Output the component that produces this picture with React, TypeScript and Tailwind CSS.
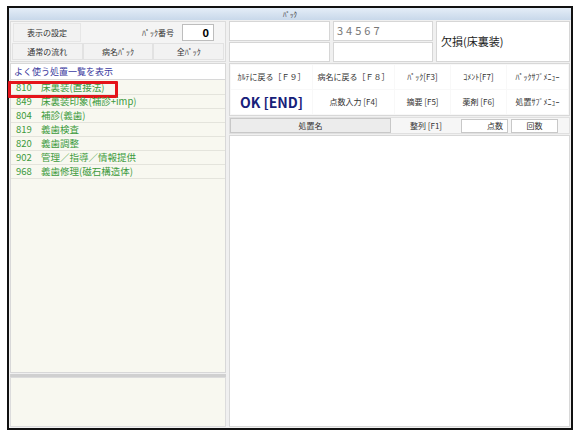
import React from 'react';

const font = { fontFamily: '"Noto Sans CJK JP", "Noto Sans", sans-serif' };

const items = [
  { code: '810', name: '床裏装(直接法)' },
  { code: '849', name: '床裏装印象(補診+imp)' },
  { code: '804', name: '補診(義歯)' },
  { code: '819', name: '義歯検査' },
  { code: '820', name: '義歯調整' },
  { code: '902', name: '管理／指導／情報提供' },
  { code: '968', name: '義歯修理(磁石構造体)' },
];

const row1 = ['ｶﾙﾃに戻る［Ｆ９］', '病名に戻る［Ｆ８］', 'ﾊﾟｯｸ[F3]', 'ｺﾒﾝﾄ[F7]', 'ﾊﾟｯｸｻﾌﾞﾒﾆｭｰ'];
const row2 = ['点数入力 [F4]', '摘要 [F5]', '薬剤 [F6]', '処置ｻﾌﾞﾒﾆｭｰ'];
const colW = ['w-[81px]', 'w-[81px]', 'w-[55px]', 'w-[55px]', 'flex-1'];

export default function App() {
  return (
    <div className="w-[581px] h-[436px] bg-white pt-[6px] pl-[7px]" style={font}>
      <div className="w-[566px] h-[424px] border-2 border-[#111] flex flex-col bg-[#f0f0f0]">
        {/* title bar */}
        <div className="h-[12px] bg-gradient-to-b from-[#e4edf7] to-[#c8d8ea] flex items-center justify-center text-[7px] leading-none text-[#333]">
          ﾊﾟｯｸ
        </div>

        <div className="flex-1 flex gap-[3px] pl-[1px] pt-[1px]">
          {/* left column */}
          <div className="w-[216px] flex flex-col">
            <div className="h-[41px] border border-[#dcdcdc] bg-[#f4f4f4] flex flex-col p-[1px] gap-[1px]">
              <div className="flex h-[19px] items-center">
                <div className="w-[68px] h-full ml-[1px] border border-[#e6e6e6] bg-[#f2f2f2] flex items-center justify-center text-[8px] text-[#333]">表示の設定</div>
                <div className="flex-1 text-right pr-[8px] text-[8px] text-[#333]">ﾊﾟｯｸ番号</div>
                <div className="w-[32px] h-[17px] mr-[10px] bg-white border border-[#bdbdbd] flex items-center justify-end pr-[4px] text-[11px] font-bold text-black">0</div>
              </div>
              <div className="flex h-[17px]">
                {['通常の流れ', '病名ﾊﾟｯｸ', '全ﾊﾟｯｸ'].map((t) => (
                  <div key={t} className="flex-1 border border-[#e2e2e2] bg-[#f2f2f2] flex items-center justify-center text-[8px] text-[#333]">{t}</div>
                ))}
              </div>
            </div>

            <div className="mt-[1px] h-[310px] border border-[#d8d8d8] bg-[#f8f8f0] flex flex-col">
              <div className="h-[16px] bg-white border-b border-[#d8d8d8] flex items-center pl-[3px] text-[9px] text-[#3b3ba0]">よく使う処置一覧を表示</div>
              <div className="flex flex-col pt-[1px]">
                {items.map((it) => (
                  <div key={it.code} className="relative h-[14px] border-b border-[#e4e4dc] flex items-center text-[9.5px] text-[#3c9a3c]">
                    <span className="w-[30px] pl-[5px]">{it.code}</span>
                    <span>{it.name}</span>
                    {it.code === '810' && (
                      <div className="absolute left-[-3px] top-[0px] w-[110px] h-[17px] border-[3px] border-[#e5141b] rounded-[1px]" />
                    )}
                  </div>
                ))}
              </div>
            </div>

            <div className="h-[3px] bg-[#d0d0d0] mt-[1px]" />
            <div className="flex-1 border border-[#dcdcdc] bg-[#f8f8f0] mb-[1px]" />
          </div>

          {/* right column */}
          <div className="flex-1 flex flex-col pr-[1px]">
            <div className="h-[41px] flex gap-[3px]">
              <div className="w-[101px] flex flex-col gap-[1px]">
                <div className="flex-1 bg-white border border-[#d6d6d6]" />
                <div className="flex-1 bg-white border border-[#d6d6d6]" />
              </div>
              <div className="w-[100px] flex flex-col gap-[1px]">
                <div className="flex-1 bg-white border border-[#d6d6d6] pl-[3px] text-[11px] leading-[16px] tracking-[3px] text-[#777]">34567</div>
                <div className="flex-1 bg-white border border-[#d6d6d6]" />
              </div>
              <div className="flex-1 bg-white border border-[#d6d6d6] flex items-center pl-[4px] text-[11px] text-[#222]">欠損(床裏装)</div>
            </div>

            <div className="mt-[1px] h-[53px] border border-[#d8d8d8] bg-[#f8f8f8] p-[1px] flex flex-col gap-[1px]">
              <div className="flex h-[24px] gap-[1px]">
                {row1.map((t, i) => (
                  <div key={t} className={`${colW[i]} bg-white flex items-center justify-center text-[8px] text-[#333] whitespace-nowrap`}>{t}</div>
                ))}
              </div>
              <div className="flex h-[24px] gap-[1px]">
                <div className="w-[81px] bg-white flex items-center justify-center text-[14px] font-bold text-[#17207a] whitespace-nowrap">OK [END]</div>
                {row2.map((t, i) => (
                  <div key={t} className={`${colW[i + 1]} bg-white flex items-center justify-center text-[8px] text-[#333] whitespace-nowrap`}>{t}</div>
                ))}
              </div>
            </div>

            <div className="mt-[1px] h-[17px] flex items-center gap-[2px] border border-[#e0e0e0] bg-[#f6f6f6]">
              <div className="w-[161px] h-[15px] bg-[#ececec] border border-[#c8c8c8] flex items-center justify-center text-[8px] text-[#333]">処置名</div>
              <div className="w-[66px] h-[15px] flex items-center justify-center text-[8px] text-[#333]">整列 [F1]</div>
              <div className="w-[47px] h-[14px] bg-white border border-[#c8c8c8] flex items-center justify-end pr-[4px] text-[8px] text-[#333]">点数</div>
              <div className="w-[47px] h-[14px] ml-[1px] bg-white border border-[#c8c8c8] flex items-center justify-center text-[8px] text-[#333]">回数</div>
            </div>

            <div className="flex-1 mt-[1px] bg-white border border-[#d8d8d8] mb-[1px]" />
          </div>
        </div>
      </div>
    </div>
  );
}
